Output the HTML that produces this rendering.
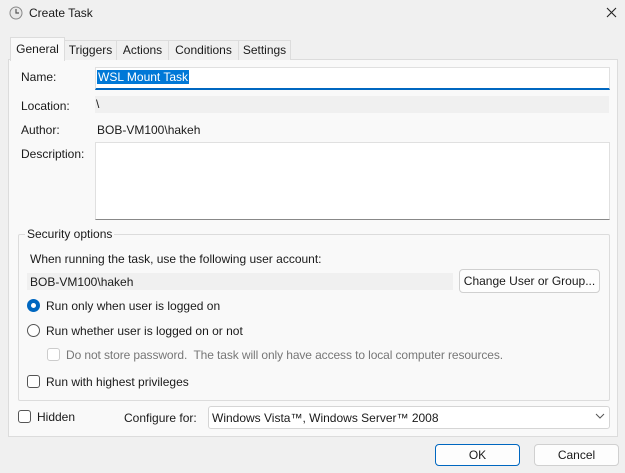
<!DOCTYPE html><html><head><style>
body{margin:0;width:625px;height:473px;background:#f0f0f0;font-family:"Liberation Sans",sans-serif;font-size:12px;color:#1a1a1a;position:relative;overflow:hidden}
.a{position:absolute;white-space:nowrap}
.tab{position:absolute;top:40px;height:19px;border:1px solid #dcdcdc;border-bottom:none;background:#f0f0f0;text-align:center;line-height:19px}
.btn{position:absolute;border:1px solid #d0d0d0;border-radius:4px;background:#fdfdfd;text-align:center}
.cb{position:absolute;width:11px;height:11px;border:1px solid #555;border-radius:3px;background:#fff}
.rd{position:absolute;width:11px;height:11px;border:1px solid #555;border-radius:50%;background:#fff}
</style></head><body>
<svg class="a" style="left:9px;top:6px" width="14" height="14"><circle cx="7" cy="7" r="6" fill="#e8e8e8" stroke="#888"/><path d="M7 3V7H10" stroke="#555" fill="none" stroke-width="1.2"/></svg>
<div class="a" style="left:29px;top:6px">Create Task</div>
<svg class="a" style="left:606px;top:7px" width="11" height="11"><path d="M1 1L10 10M10 1L1 10" stroke="#222" stroke-width="1.1"/></svg>
<div class="a" style="left:8px;top:59px;width:608px;height:376px;background:#f9f9f9;border:1px solid #dcdcdc"></div>
<div class="tab" style="left:10px;top:37px;width:53px;height:23px;background:#f9f9f9;line-height:22px;border-color:#dcdcdc">General</div>
<div class="tab" style="left:64px;width:51px">Triggers</div>
<div class="tab" style="left:116px;width:51px">Actions</div>
<div class="tab" style="left:168px;width:69px">Conditions</div>
<div class="tab" style="left:238px;width:51px">Settings</div>
<div class="a" style="left:21px;top:70px">Name:</div>
<div class="a" style="left:95px;top:67px;width:513px;height:20px;background:#fff;border:1px solid #e0e0e0;border-bottom:2px solid #0067c0"></div>
<div class="a" style="left:97px;top:70px;background:#0078d7;color:#fff;padding:0 1px">WSL Mount Task</div>
<div class="a" style="left:21px;top:99px">Location:</div>
<div class="a" style="left:95px;top:96px;width:514px;height:17px;background:#f0f0f0"></div>
<div class="a" style="left:96px;top:97px">\</div>
<div class="a" style="left:21px;top:123px">Author:</div>
<div class="a" style="left:97px;top:123px">BOB-VM100\hakeh</div>
<div class="a" style="left:21px;top:147px">Description:</div>
<div class="a" style="left:95px;top:142px;width:513px;height:76px;background:#fff;border:1px solid #e0e0e0;border-bottom-color:#888"></div>
<div class="a" style="left:18px;top:234px;width:590px;height:165px;border:1px solid #dcdcdc;border-radius:2px"></div>
<div class="a" style="left:25px;top:227px;background:#f9f9f9;padding:0 2px">Security options</div>
<div class="a" style="left:30px;top:252px">When running the task, use the following user account:</div>
<div class="a" style="left:27px;top:273px;width:426px;height:17px;background:#f0f0f0"></div>
<div class="a" style="left:30px;top:275px">BOB-VM100\hakeh</div>
<div class="btn" style="left:459px;top:269px;width:139px;height:22px;line-height:22px">Change User or Group...</div>
<div class="rd" style="left:27px;top:299px;border:4px solid #0067c0;width:5px;height:5px"></div>
<div class="a" style="left:46px;top:299px">Run only when user is logged on</div>
<div class="rd" style="left:27px;top:324px"></div>
<div class="a" style="left:46px;top:324px">Run whether user is logged on or not</div>
<div class="cb" style="left:47px;top:348px;border-color:#ccc"></div>
<div class="a" style="left:66px;top:348px;color:#777;letter-spacing:-0.1px">Do not store password.&nbsp; The task will only have access to local computer resources.</div>
<div class="cb" style="left:27px;top:375px"></div>
<div class="a" style="left:46px;top:375px">Run with highest privileges</div>
<div class="cb" style="left:18px;top:410px"></div>
<div class="a" style="left:37px;top:410px">Hidden</div>
<div class="a" style="left:124px;top:411px">Configure for:</div>
<div class="a" style="left:208px;top:406px;width:400px;height:21px;background:#fff;border:1px solid #d5d5d5;border-radius:3px"></div>
<div class="a" style="left:212px;top:411px">Windows Vista™, Windows Server™ 2008</div>
<svg class="a" style="left:595px;top:413px" width="10" height="6"><path d="M1 1L5 5L9 1" stroke="#555" fill="none"/></svg>
<div class="btn" style="left:435px;top:444px;width:83px;height:20px;line-height:20px;border-color:#0067c0">OK</div>
<div class="btn" style="left:534px;top:444px;width:83px;height:20px;line-height:20px">Cancel</div>
</body></html>
